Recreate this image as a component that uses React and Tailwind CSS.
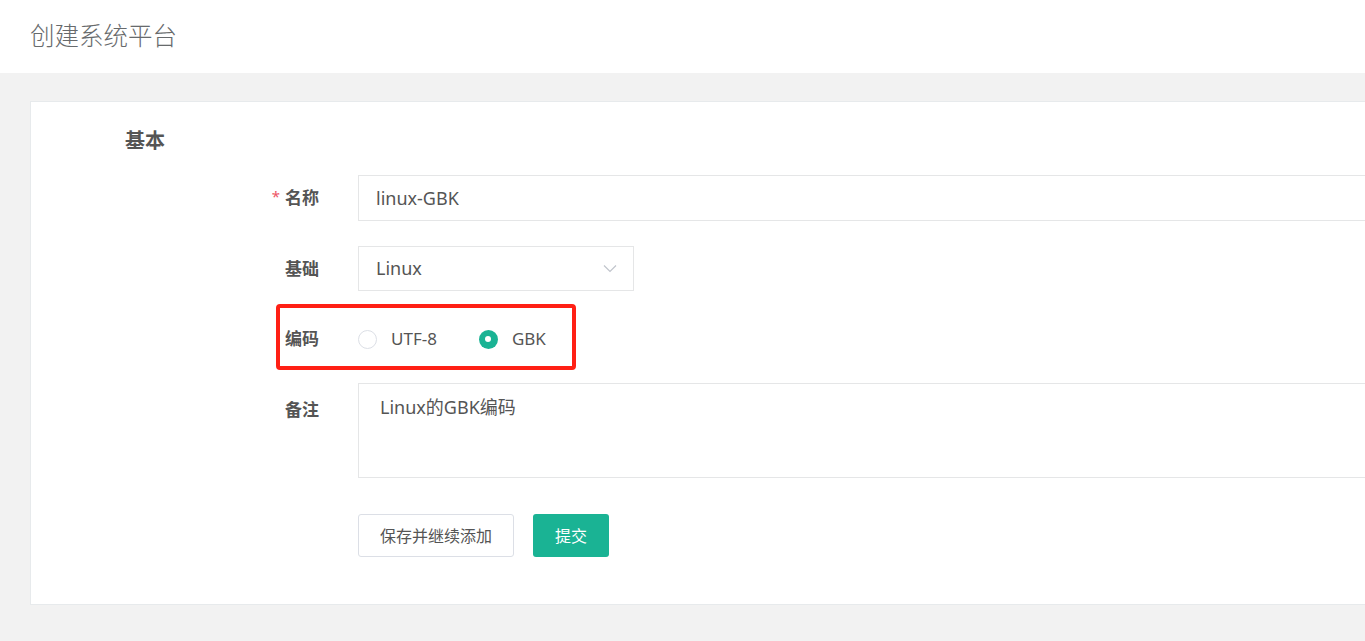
import React from 'react';

const font = { fontFamily: '"Noto Sans", "Noto Sans CJK SC", sans-serif' };

function Label({ children, required, className = '' }) {
	return (
		<div className={`flex w-[288px] shrink-0 justify-end text-[17px] font-bold text-[#555] ${className}`}>
			{required && <span className="mr-[5px] text-[15px] font-normal text-[#ed5565]">*</span>}
			{children}
		</div>
	);
}

function Radio({ checked, label }) {
	return (
		<label className="flex items-center">
			{checked ? (
				<span className="flex h-[19px] w-[19px] items-center justify-center rounded-full bg-[#1ab394]">
					<span className="h-[6px] w-[6px] rounded-full bg-white" />
				</span>
			) : (
				<span className="h-[19px] w-[19px] rounded-full border border-[#dcdfe6] bg-white" />
			)}
			<span className="ml-[14px] text-[17px] text-[#555]">{label}</span>
		</label>
	);
}

export default function App() {
	return (
		<div className="min-h-[641px] w-full overflow-hidden bg-[#f2f2f2]" style={font}>
			{/* Page header */}
			<div className="flex h-[73px] items-center bg-white px-[30px]">
				<h1 className="text-[24.5px] font-light text-[#676a6c]">创建系统平台</h1>
			</div>

			{/* Form card */}
			<div className="mt-[28px] ml-[30px] w-[1400px] border border-[#e7eaec] bg-white pt-[29px] pb-[47px]">
				<h2 className="ml-[94px] h-[20px] text-[20px] leading-[20px] font-bold text-[#555]">基本</h2>

				<div className="mt-[24px] flex items-center">
					<Label required>名称</Label>
					<input
						className="ml-[39px] h-[46px] w-[1100px] border border-[#e5e6e7] px-[17px] text-[18px] text-[#555] outline-none"
						defaultValue="linux-GBK"
					/>
				</div>

				<div className="mt-[25px] flex items-center">
					<Label>基础</Label>
					<div className="ml-[39px] flex h-[45px] w-[276px] items-center justify-between border border-[#e5e6e7] pr-[16px] pl-[17px]">
						<span className="text-[18px] text-[#555]">Linux</span>
						<svg width="14" height="9" viewBox="0 0 14 9" fill="none">
							<path d="M1 1.5 L7 7.5 L13 1.5" stroke="#c0c4cc" strokeWidth="1.2" />
						</svg>
					</div>
				</div>

				<div className="relative mt-[30px] flex h-[36px] items-center">
					<Label>编码</Label>
					<div className="ml-[39px] flex items-center gap-[42px]">
						<Radio label="UTF-8" />
						<Radio checked label="GBK" />
					</div>
					{/* annotation box */}
					<div className="absolute top-[-17px] left-[245px] h-[66px] w-[300px] rounded-[4px] border-[4px] border-[#ff2015]" />
				</div>

				<div className="mt-[26px] flex items-start">
					<Label className="pt-[14px]">备注</Label>
					<textarea
						className="ml-[39px] h-[95px] w-[1100px] resize-none border border-[#e5e6e7] px-[21px] pt-[10px] text-[18px] text-[#555] outline-none"
						defaultValue="Linux的GBK编码"
					/>
				</div>

				<div className="mt-[36px] ml-[327px] flex items-center gap-[19px]">
					<button className="h-[43px] w-[156px] rounded-[3px] border border-[#dcdfe6] bg-white text-[16px] text-[#555]">
						保存并继续添加
					</button>
					<button className="h-[43px] w-[76px] rounded-[3px] bg-[#1ab394] text-[16px] text-white">提交</button>
				</div>
			</div>
		</div>
	);
}
